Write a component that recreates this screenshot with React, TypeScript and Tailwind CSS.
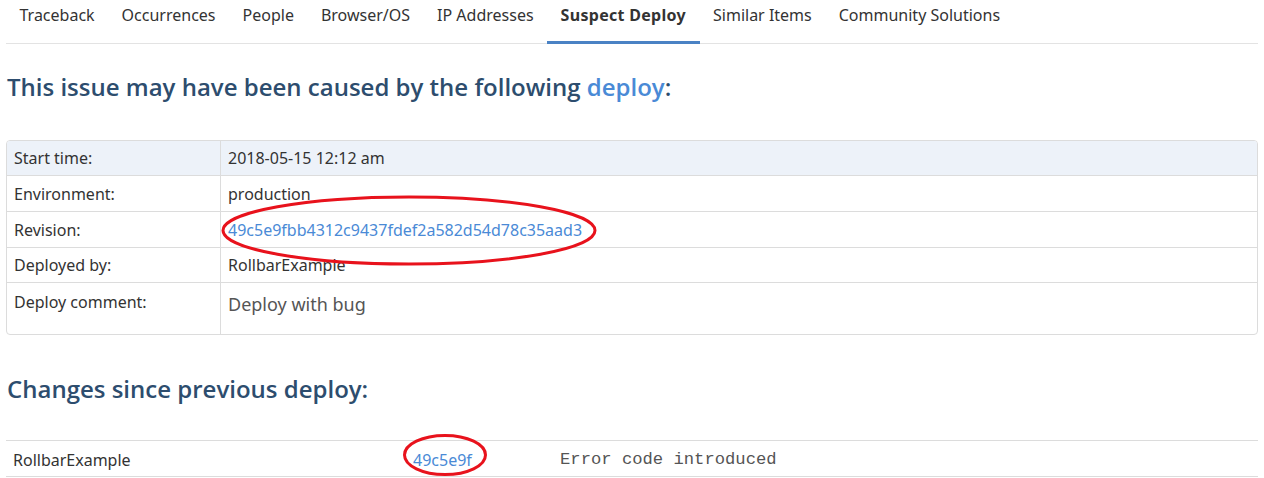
import React from "react";

const tabs = [
  "Traceback",
  "Occurrences",
  "People",
  "Browser/OS",
  "IP Addresses",
  "Suspect Deploy",
  "Similar Items",
  "Community Solutions",
];

const rows: { label: string; value: React.ReactNode; h: string; bg?: boolean }[] = [
  { label: "Start time:", value: "2018-05-15 12:12 am", h: "h-[35px]", bg: true },
  { label: "Environment:", value: "production", h: "h-[36px]" },
  {
    label: "Revision:",
    value: <a className="text-[#4a8ad6]">49c5e9fbb4312c9437fdef2a582d54d78c35aad3</a>,
    h: "h-[36px]",
  },
  { label: "Deployed by:", value: "RollbarExample", h: "h-[35px]" },
];

export default function App() {
  return (
    <div
      className="relative w-[1264px] h-[478px] overflow-hidden bg-white px-[6px] text-[#333] text-[16px]"
      style={{ fontFamily: '"Noto Sans", "Open Sans", sans-serif' }}
    >
      {/* tabs */}
      <div className="flex border-b border-[#e3e3e3]">
        {tabs.map((t) => {
          const active = t === "Suspect Deploy";
          return (
            <div
              key={t}
              className={
                "px-[13.5px] pt-[3px] pb-[14px] leading-[24px] border-b-[3px] -mb-px " +
                (active
                  ? "border-[#4a82c4] font-bold text-[#333] tracking-[0.3px]"
                  : "border-transparent text-[#333]")
              }
            >
              {t}
            </div>
          );
        })}
      </div>

      {/* heading */}
      <h2
        className="mt-[27px] text-[24px] leading-[32px] font-semibold text-[#2d4d6e] pl-[1px]"
        style={{ fontFamily: '"Open Sans", sans-serif' }}
      >
        This issue may have been caused by the following{" "}
        <a className="text-[#4a8ad6]">deploy</a>:
      </h2>

      {/* deploy table */}
      <div className="mt-[37px] border border-[#dcdcdc] rounded-[4px] overflow-hidden">
        {rows.map((r) => (
          <div
            key={r.label}
            className={
              "flex items-center border-b border-[#dcdcdc] " +
              r.h +
              " " +
              (r.bg ? "bg-[#edf2f9]" : "bg-white")
            }
          >
            <div className="w-[214px] h-full flex items-center pl-[7px] border-r border-[#dcdcdc]">
              {r.label}
            </div>
            <div className="pl-[7px]">{r.value}</div>
          </div>
        ))}
        <div className="flex h-[51px]">
          <div className="w-[214px] h-full pl-[7px] pt-[7px] leading-[24px] border-r border-[#dcdcdc]">
            Deploy comment:
          </div>
          <div className="pl-[7px] pt-[8px] text-[18px] leading-[26px] text-[#555]">
            Deploy with bug
          </div>
        </div>
      </div>

      {/* changes heading */}
      <h2
        className="mt-[38px] text-[24px] leading-[32px] font-semibold text-[#2d4d6e] pl-[1px]"
        style={{ fontFamily: '"Open Sans", sans-serif' }}
      >
        Changes since previous deploy:
      </h2>

      <div className="mt-[35px] border-t border-b border-[#dcdcdc] flex h-[37px] items-center pt-[2px]">
        <div className="w-[400px] pl-[7px]">RollbarExample</div>
        <div className="w-[147px] pl-[7px]">
          <a className="text-[#4a8ad6]">49c5e9f</a>
        </div>
        <div
          className="pl-[7px] text-[17.2px] text-[#555]"
          style={{ fontFamily: '"Liberation Mono", monospace' }}
        >
          Error code introduced
        </div>
      </div>

      {/* annotation overlay */}
      <svg
        className="absolute left-0 top-0 pointer-events-none"
        width="1264"
        height="478"
        viewBox="0 0 1264 478"
      >
        <ellipse cx="409" cy="230.5" rx="186" ry="33.5" fill="none" stroke="#e8121c" strokeWidth="3" />
        <ellipse cx="445" cy="455" rx="40.5" ry="19.5" fill="none" stroke="#e8121c" strokeWidth="3" />
      </svg>
    </div>
  );
}
